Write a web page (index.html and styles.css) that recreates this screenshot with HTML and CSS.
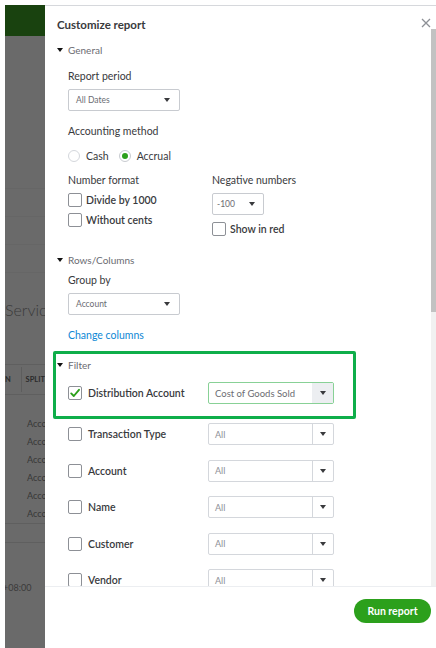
FILE: index.html
```html
<!DOCTYPE html>
<html>
<head>
<meta charset="utf-8">
<link rel="stylesheet" href="styles.css">
</head>
<body>
<div class="app">
  <div class="bg">
    <div class="bg-header"></div>
    <div class="bg-body">
      <div class="bg-rule r1"></div>
      <div class="bg-rule r2"></div>
      <div class="bg-rule r2"></div>
      <div class="bg-rule r2"></div>
      <div class="bg-title">Servic</div>
      <div class="bg-rule r-head"></div>
      <div class="bg-thead">
        <div class="bg-th-left">N</div>
        <div class="bg-th-sep"></div>
        <div class="bg-th">SPLIT</div>
      </div>
      <div class="bg-rule"></div>
      <div class="bg-rows">
        <div class="bg-cell">Acco</div>
        <div class="bg-cell">Acco</div>
        <div class="bg-cell">Acco</div>
        <div class="bg-cell">Acco</div>
        <div class="bg-cell">Acco</div>
        <div class="bg-cell">Acco</div>
      </div>
      <div class="bg-rule"></div>
      <div class="bg-rule r-foot"></div>
      <div class="bg-time">+08:00</div>
    </div>
  </div>

  <div class="panel">
    <div class="panel-body">
      <div class="content">
        <div class="title-row">
          <div class="title">Customize report</div>
          <svg class="close" width="10" height="10" viewBox="0 0 10 10"><path d="M1 1 L9 9 M9 1 L1 9" stroke="#8d9096" stroke-width="1.3" fill="none"/></svg>
        </div>

        <div class="section-head"><span class="tri"></span>General</div>
        <div class="indent">
          <div class="lbl lbl-first">Report period</div>
          <div class="sel sel-wide"><span>All Dates</span><span class="arrow"></span></div>
          <div class="lbl lbl-gap">Accounting method</div>
          <div class="radio-row">
            <span class="radio"></span><span class="radio-text">Cash</span>
            <span class="radio radio-on"><span class="dot"></span></span><span class="radio-text">Accrual</span>
          </div>
          <div class="num-grid">
            <div class="col">
              <div class="lbl">Number format</div>
              <div class="cb-row cb-row-first"><span class="cb"></span><span class="cb-text">Divide by 1000</span></div>
              <div class="cb-row cb-row-second"><span class="cb"></span><span class="cb-text">Without cents</span></div>
            </div>
            <div class="col">
              <div class="lbl">Negative numbers</div>
              <div class="sel sel-small"><span>-100</span><span class="arrow"></span></div>
              <div class="cb-row cb-row-red"><span class="cb"></span><span class="cb-text">Show in red</span></div>
            </div>
          </div>
        </div>

        <div class="section-head section-rows"><span class="tri"></span>Rows/Columns</div>
        <div class="indent">
          <div class="lbl lbl-tight">Group by</div>
          <div class="sel sel-wide"><span>Account</span><span class="arrow"></span></div>
          <div class="link">Change columns</div>
        </div>

        <div class="highlight">
          <div class="section-head section-filter"><span class="tri"></span>Filter</div>
          <div class="frow frow-dist">
            <span class="cb cb-on"><svg width="12" height="12" viewBox="0 0 12 12"><path d="M2.2 6.4 L4.8 9 L10 2.8" stroke="#2ca01c" stroke-width="1.9" fill="none" stroke-linecap="round" stroke-linejoin="round"/></svg></span>
            <span class="f-label">Distribution Account</span>
            <div class="fsel fsel-active"><span class="fsel-val">Cost of Goods Sold</span><span class="fsel-btn"><span class="arrow"></span></span></div>
          </div>
        </div>

        <div class="filters">
          <div class="frow"><span class="cb"></span><span class="f-label">Transaction Type</span><div class="fsel"><span class="fsel-val">All</span><span class="fsel-btn"><span class="arrow"></span></span></div></div>
          <div class="frow"><span class="cb"></span><span class="f-label">Account</span><div class="fsel"><span class="fsel-val">All</span><span class="fsel-btn"><span class="arrow"></span></span></div></div>
          <div class="frow"><span class="cb"></span><span class="f-label">Name</span><div class="fsel"><span class="fsel-val">All</span><span class="fsel-btn"><span class="arrow"></span></span></div></div>
          <div class="frow"><span class="cb"></span><span class="f-label">Customer</span><div class="fsel"><span class="fsel-val">All</span><span class="fsel-btn"><span class="arrow"></span></span></div></div>
          <div class="frow"><span class="cb"></span><span class="f-label">Vendor</span><div class="fsel"><span class="fsel-val">All</span><span class="fsel-btn"><span class="arrow"></span></span></div></div>
        </div>
      </div>
      <div class="scrollbar">
        <div class="thumb"></div>
        <div class="track"></div>
      </div>
    </div>
    <div class="footer">
      <button class="run">Run report</button>
    </div>
  </div>
</div>
</body>
</html>
```

FILE: styles.css
```css
html, body {
  margin: 0;
  padding: 0;
  background: #ffffff;
}
body {
  font-family: Lato, "Open Sans", "Liberation Sans", sans-serif;
  color: #393a3d;
  width: 436px;
  height: 648px;
  overflow: hidden;
}
.app {
  display: flex;
  height: 643px;
  margin-top: 5px;
  margin-left: 5px;
}

/* background page (dimmed) */
.bg {
  width: 40px;
  display: flex;
  flex-direction: column;
  overflow: hidden;
  white-space: nowrap;
}
.bg-header {
  height: 31px;
  flex: none;
  background: #19420f;
}
.bg-body {
  flex: 1;
  background: #6a6a6a;
  display: flex;
  flex-direction: column;
  color: #333333;
}
.bg-body > * {
  flex-shrink: 0;
}
.bg-rule {
  height: 1px;
  background: #5f5f5f;
}
.r1 { margin-top: 152px; background: #666666; }
.r2 { margin-top: 27px; background: #666666; }
.bg-title {
  margin-top: 27px;
  height: 20px;
  line-height: 20px;
  font-size: 16px;
  color: #3a3a3a;
  font-weight: 300;
}
.r-head { margin-top: 44px; }
.bg-thead {
  height: 29px;
  display: flex;
  align-items: center;
  font-size: 7.5px;
  font-weight: 700;
  color: #2b2b2b;
}
.bg-th-left {
  width: 17px;
}
.bg-th-sep {
  width: 1px;
  align-self: stretch;
  margin: 2px 0;
  background: #5d5d5d;
}
.bg-th {
  padding-left: 4px;
}
.bg-rows {
  margin-top: 20px;
  display: flex;
  flex-direction: column;
}
.bg-cell {
  height: 18px;
  line-height: 18px;
  padding-left: 22px;
  font-size: 9px;
  color: #363636;
}
.r-foot { margin-top: 18px; }
.bg-time {
  margin-top: 36px;
  height: 18px;
  line-height: 18px;
  font-size: 9px;
  color: #3a3a3a;
  margin-left: -2px;
}

/* panel */
.panel {
  flex: 1;
  display: flex;
  flex-direction: column;
  background: #ffffff;
  border-top: 1px solid #d6d8dc;
}
.panel-body {
  height: 580px;
  flex: none;
  display: flex;
  overflow: hidden;
}
.content {
  flex: 1;
  padding-left: 12px;
  display: flex;
  flex-direction: column;
}
.content > * {
  flex-shrink: 0;
}
.scrollbar {
  width: 5px;
  display: flex;
  flex-direction: column;
  padding-top: 23px;
}
.thumb {
  height: 283px;
  flex: none;
  background: #c2c2c2;
}
.track {
  flex: 1;
  background: #f1f1f1;
}

.title-row {
  height: 35px;
  display: flex;
  align-items: center;
  justify-content: space-between;
}
.title {
  font-size: 11.5px;
  font-weight: 700;
  color: #393a3d;
  padding-top: 1px;
}
.close {
  display: block;
  margin-top: -1px;
}

.section-head {
  height: 18px;
  display: flex;
  align-items: center;
  gap: 5px;
  font-size: 10px;
  color: #6b6c72;
}
.tri {
  width: 0;
  height: 0;
  border-left: 3px solid transparent;
  border-right: 3px solid transparent;
  border-top: 4px solid #111111;
}
.indent {
  padding-left: 11px;
  display: flex;
  flex-direction: column;
}
.lbl {
  height: 18px;
  line-height: 18px;
  font-size: 10.5px;
  color: #393a3d;
}
.lbl-first { margin-top: 8px; }
.lbl-gap { margin-top: 11px; }
.lbl-tight { margin-top: 2px; }

.sel {
  height: 22px;
  box-sizing: border-box;
  border: 1px solid #c8cbd0;
  border-radius: 2px;
  display: flex;
  align-items: center;
  justify-content: space-between;
  font-size: 8.5px;
  color: #6b6c72;
  margin-top: 4px;
}
.sel-wide {
  width: 112px;
  padding: 0 9px 0 7px;
}
.sel-small {
  width: 52px;
  padding: 0 8px 0 4px;
}
.arrow {
  width: 0;
  height: 0;
  border-left: 3px solid transparent;
  border-right: 3px solid transparent;
  border-top: 4px solid #393a3d;
}

.radio-row {
  margin-top: 7px;
  height: 18px;
  display: flex;
  align-items: center;
  font-size: 10.5px;
}
.radio {
  width: 12px;
  height: 12px;
  box-sizing: border-box;
  border: 1px solid #d4d7dc;
  border-radius: 50%;
  display: flex;
  align-items: center;
  justify-content: center;
}
.radio-on {
  border-color: #c8cbd0;
}
.dot {
  width: 6px;
  height: 6px;
  border-radius: 50%;
  background: #2ca01c;
}
.radio-text {
  margin-left: 6px;
  margin-right: 10px;
}

.num-grid {
  margin-top: 6px;
  display: grid;
  grid-template-columns: 144px auto;
}
.col {
  display: flex;
  flex-direction: column;
}
.cb-row {
  display: flex;
  align-items: center;
  height: 14px;
  font-size: 10.5px;
  font-weight: 600;
}
.cb-row-first { margin-top: 4px; }
.cb-row-second { margin-top: 6px; }
.cb-row-red { margin-top: 7px; }
.cb {
  width: 14px;
  height: 14px;
  box-sizing: border-box;
  border: 1px solid #8d9096;
  border-radius: 2px;
  flex: none;
  display: flex;
  align-items: center;
  justify-content: center;
}
.cb-text {
  margin-left: 4px;
}

.section-rows { margin-top: 15px; }
.link {
  margin-top: 11px;
  height: 18px;
  line-height: 18px;
  font-size: 10.5px;
  color: #0d87d4;
}

.highlight {
  margin-top: 7px;
  margin-left: -4px;
  width: 303px;
  box-sizing: border-box;
  border: 3px solid #0fae4a;
  border-radius: 2px;
  padding: 2px 0 12px 1px;
}
.section-filter {
  padding-left: 0;
}
.frow {
  height: 22px;
  display: flex;
  align-items: center;
}
.frow-dist {
  margin-top: 8px;
  padding-left: 11px;
}
.f-label {
  width: 120px;
  margin-left: 6px;
  font-size: 10.5px;
  font-weight: 600;
  color: #393a3d;
}
.fsel {
  width: 126px;
  height: 22px;
  box-sizing: border-box;
  border: 1px solid #d4d7dc;
  border-radius: 2px;
  display: flex;
  align-items: stretch;
  font-size: 9px;
  color: #8d9096;
}
.fsel-val {
  flex: 1;
  display: flex;
  align-items: center;
  padding-left: 6px;
}
.fsel-btn {
  width: 20px;
  border-left: 1px solid #d4d7dc;
  display: flex;
  align-items: center;
  justify-content: center;
}
.fsel-active {
  border-color: #88d196;
  color: #6b6c72;
  font-size: 9.5px;
}
.fsel-active .fsel-btn {
  border-left: none;
  background: #eceef1;
  width: 21px;
}

.filters {
  margin-top: 4px;
  padding-left: 11px;
  display: flex;
  flex-direction: column;
  gap: 14.5px;
}
.filters > * {
  flex-shrink: 0;
}

.footer {
  flex: 1;
  border-top: 1px solid #eceef1;
  display: flex;
  justify-content: flex-end;
  align-items: flex-start;
  padding: 12px 5px 0 0;
}
.run {
  width: 77px;
  height: 24px;
  border: none;
  border-radius: 12px;
  background: #2ca01c;
  color: #ffffff;
  font-family: Lato, "Open Sans", "Liberation Sans", sans-serif;
  font-size: 10.5px;
  font-weight: 700;
  padding: 0;
}
```
